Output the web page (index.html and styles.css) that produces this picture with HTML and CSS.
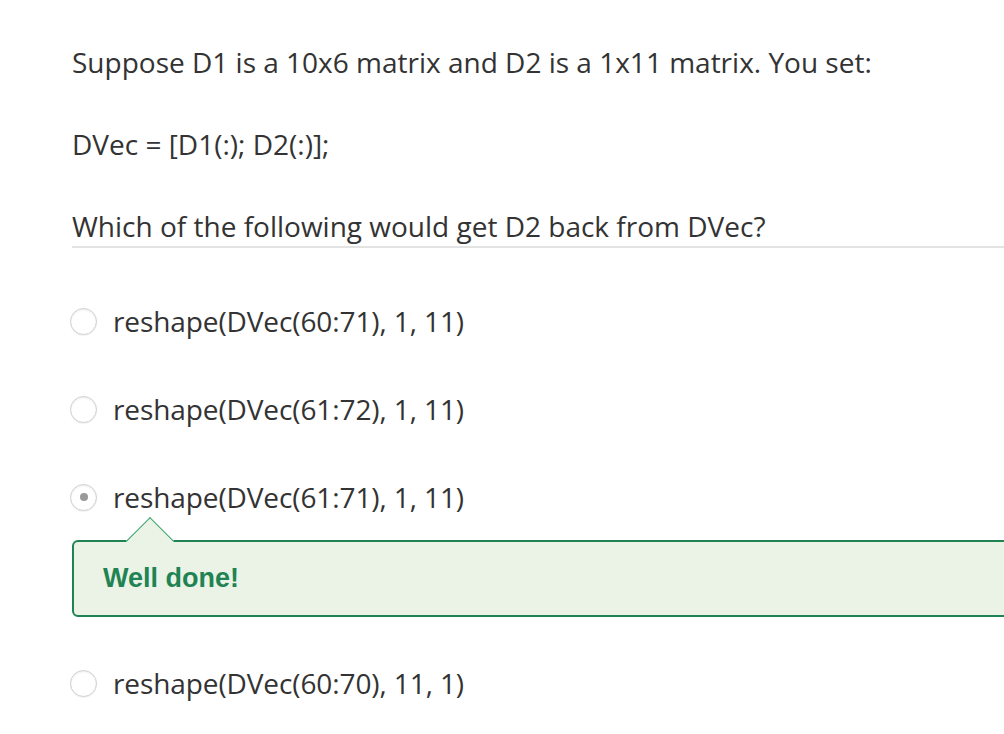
FILE: index.html
```html
<!DOCTYPE html>
<html>
<head>
<meta charset="utf-8">
<link rel="stylesheet" href="styles.css">
</head>
<body>
<div class="page">
  <div class="prompt">
    <p class="line">Suppose D1 is a 10x6 matrix and D2 is a 1x11 matrix. You set:</p>
    <p class="line">DVec = [D1(:); D2(:)];</p>
    <p class="line question">Which of the following would get D2 back from DVec?</p>
  </div>
  <div class="options">
    <div class="option"><span class="radio"></span><span class="label">reshape(DVec(60:71), 1, 11)</span></div>
    <div class="option"><span class="radio"></span><span class="label">reshape(DVec(61:72), 1, 11)</span></div>
    <div class="option"><span class="radio checked"></span><span class="label">reshape(DVec(61:71), 1, 11)</span></div>
    <div class="feedback">
      <span class="arrow"></span>
      <span class="feedback-text">Well done!</span>
    </div>
    <div class="option"><span class="radio"></span><span class="label">reshape(DVec(60:70), 11, 1)</span></div>
  </div>
</div>
</body>
</html>
```
FILE: styles.css
```css
html, body {
  margin: 0;
  padding: 0;
  background: #fff;
  overflow: hidden;
}
body {
  width: 1004px;
  height: 734px;
  font-family: "Open Sans", "DejaVu Sans", sans-serif;
  color: #333;
}
.page {
  padding: 40px 0 0 72px;
  width: 932px;
  overflow: hidden;
}
.prompt {
  width: 1000px;
}
.line {
  margin: 0;
  font-size: 28px;
  line-height: 44px;
}
.line + .line {
  margin-top: 38px;
}
.line.question {
  line-height: 40px;
  margin-top: 40px;
  border-bottom: 2px solid #e3e3e3;
}
.options {
  margin-top: 51px;
  width: 1000px;
}
.option {
  display: flex;
  align-items: center;
  height: 44px;
  margin-left: -2px;
  margin-bottom: 44px;
}
.option:nth-child(3) {
  margin-bottom: 0;
}
.radio {
  width: 27px;
  height: 27px;
  border-radius: 50%;
  border: 1px solid #d0d0d0;
  box-shadow: inset 0 1px 2px rgba(0,0,0,0.08), 0 1px 1px rgba(0,0,0,0.05);
  background: #fff;
  box-sizing: border-box;
  margin-right: 16px;
  display: flex;
  align-items: center;
  justify-content: center;
}
.radio.checked::after {
  content: "";
  width: 8px;
  height: 8px;
  border-radius: 50%;
  background: #999;
}
.label {
  font-size: 28px;
  letter-spacing: -0.1px;
}
.feedback {
  position: relative;
  margin-top: 21px;
  margin-bottom: 44px;
  height: 77px;
  box-sizing: border-box;
  border: 2px solid #1f8354;
  border-radius: 6px;
  background: #ebf3e6;
  display: flex;
  align-items: center;
  padding-left: 29px;
}
.arrow {
  position: absolute;
  left: 59px;
  top: -18px;
  width: 34px;
  height: 34px;
  background: #ebf3e6;
  border-left: 1px solid #3aa66f;
  border-top: 1px solid #3aa66f;
  transform: rotate(45deg);
  box-sizing: border-box;
}
.feedback-text {
  font-family: "Liberation Sans", Arial, sans-serif;
  font-weight: bold;
  font-size: 27px;
  color: #1f8354;
}
```
